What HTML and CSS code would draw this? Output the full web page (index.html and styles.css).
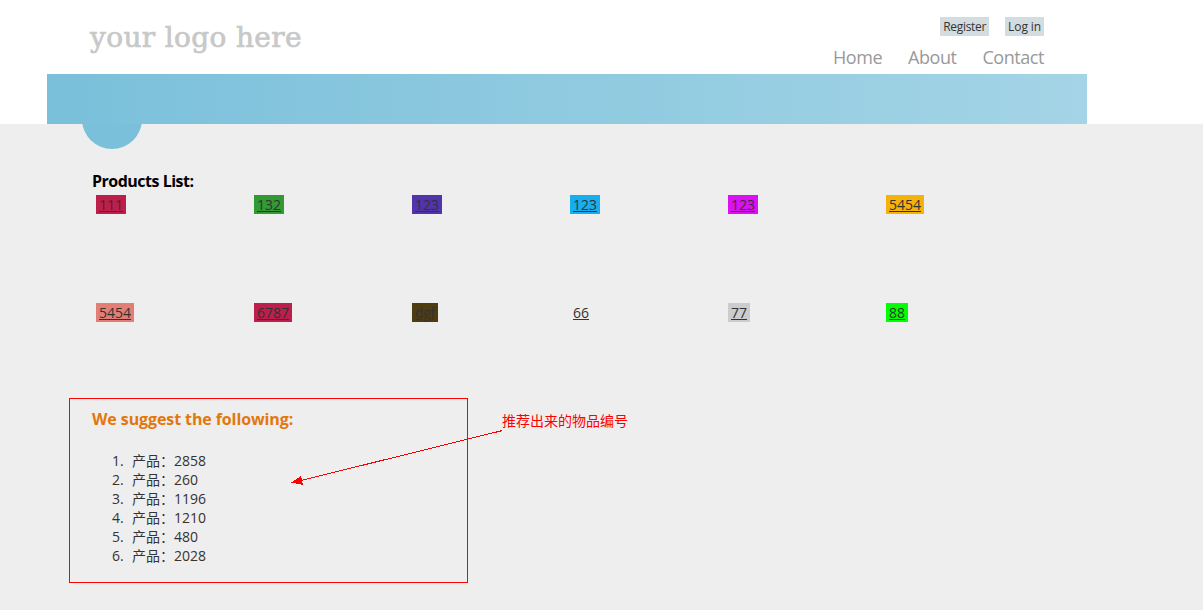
FILE: index.html
```html
<!DOCTYPE html>
<html lang="zh-CN">
<head>
<meta charset="utf-8">
<title>Products List</title>
<link rel="stylesheet" href="styles.css">
</head>
<body>
<header class="header">
  <div class="header-inner">
    <div class="top">
      <a class="logo">your logo here</a>
      <div class="links">
        <div class="account"><a>Register</a><a>Log in</a></div>
        <nav class="nav"><a>Home</a><a>About</a><a>Contact</a></nav>
      </div>
    </div>
    <div class="banner"><span class="bump"></span></div>
  </div>
</header>
<main class="main">
  <h3 class="title">Products List:</h3>
  <div class="products">
    <div><a class="tag crimson">111</a></div>
    <div><a class="tag green">132</a></div>
    <div><a class="tag purple">123</a></div>
    <div><a class="tag blue">123</a></div>
    <div><a class="tag magenta">123</a></div>
    <div><a class="tag amber">5454</a></div>
    <div><a class="tag salmon">5454</a></div>
    <div><a class="tag crimson">6787</a></div>
    <div><a class="tag brown">dgf</a></div>
    <div><a class="tag">66</a></div>
    <div><a class="tag grey">77</a></div>
    <div><a class="tag lime">88</a></div>
  </div>
  <div class="bottom">
    <section class="suggest">
      <h3 class="suggest-title">We suggest the following:</h3>
      <ol class="list">
        <li><span class="num">1.</span><span class="cjk">产品：</span>2858</li>
        <li><span class="num">2.</span><span class="cjk">产品：</span>260</li>
        <li><span class="num">3.</span><span class="cjk">产品：</span>1196</li>
        <li><span class="num">4.</span><span class="cjk">产品：</span>1210</li>
        <li><span class="num">5.</span><span class="cjk">产品：</span>480</li>
        <li><span class="num">6.</span><span class="cjk">产品：</span>2028</li>
      </ol>
    </section>
    <p class="note">推荐出来的物品编号</p>
    <svg class="arrow" width="213" height="58" viewBox="0 0 213 58" shape-rendering="crispEdges">
      <path d="M211.5 2.5 8 53" stroke="#f00" fill="none"/>
      <path d="M0 54.5 10 48 12 57Z" fill="#f00"/>
    </svg>
  </div>
</main>
</body>
</html>
```

FILE: styles.css
```css
* { box-sizing: border-box; }
body {
  margin: 0;
  height: 610px;
  overflow: hidden;
  background: #eee;
  color: #333;
  font: 14px/19px "Open Sans", "Noto Sans", "Noto Sans CJK SC", sans-serif;
}
.header { height: 124px; background: #fff; }
.header-inner { width: 1040px; margin-left: 47px; }
.top { display: flex; justify-content: space-between; height: 74px; padding: 0 43px; }
.logo {
  padding-top: 18px;
  color: #c8c8c8;
  font: 28px/40px "DejaVu Serif", serif;
  letter-spacing: 0.35px;
  -webkit-text-stroke: 0.7px #c8c8c8;
  white-space: nowrap;
}
.links { display: flex; flex-direction: column; align-items: flex-end; padding-top: 17px; }
.account { display: flex; gap: 16px; }
.account a { height: 19px; padding: 0 3px; background: #d3dce0; font-size: 12px; line-height: 20px; letter-spacing: -0.3px; }
.account a:last-child { letter-spacing: -0.1px; }
.nav { display: flex; gap: 26px; margin-top: 8px; color: #999; font-size: 18px; line-height: 26px; letter-spacing: -0.45px; }
.banner { position: relative; height: 50px; background: linear-gradient(to right, #7ac0da, #a4d4e6); }
.bump {
  position: absolute;
  left: 35px;
  top: 15px;
  width: 60px;
  height: 60px;
  border-radius: 50%;
  background: #7ac0da;
  clip-path: inset(35px 0 0 0);
}
.main { padding: 46px 0 0 92px; }
.title, .suggest-title { margin: 0; font-size: 16px; line-height: 22px; font-weight: 700; }
.title { color: #000; letter-spacing: -0.5px; }
.products {
  display: grid;
  grid-template-columns: repeat(6, 158px);
  grid-template-rows: 108px 95px;
  padding: 3px 0 0 4px;
}
.tag { display: inline-block; height: 19px; padding: 0 3px; line-height: 20px; text-decoration: underline; }
.crimson { background: #be1e4b; }
.green { background: #339933; }
.purple { background: #5133ab; }
.blue { background: #17aeef; }
.magenta { background: #d911f3; }
.amber { background: #f4b30a; }
.salmon { background: #e17f77; }
.brown { width: 26px; background: #4f3d12; letter-spacing: -0.3px; }
.grey { background: #ccc; }
.lime { background: #0f0; }
.bottom { position: relative; display: flex; margin-left: -23px; }
.suggest { width: 399px; height: 185px; padding: 9px 0 0 22px; border: 1px solid #f00; }
.suggest-title { color: #e2780c; letter-spacing: -0.1px; }
.list { margin: 21px 0 0; padding: 0 0 0 20px; list-style: none; }
.list li { display: flex; }
.num { width: 20px; }
.cjk { width: 42px; font-family: "Noto Sans CJK SC", sans-serif; }
.note { margin: 12px 0 0 34px; color: #f00; font: 14px/20px "Noto Sans CJK SC", sans-serif; }
.arrow { position: absolute; left: 222px; top: 30px; }
```
